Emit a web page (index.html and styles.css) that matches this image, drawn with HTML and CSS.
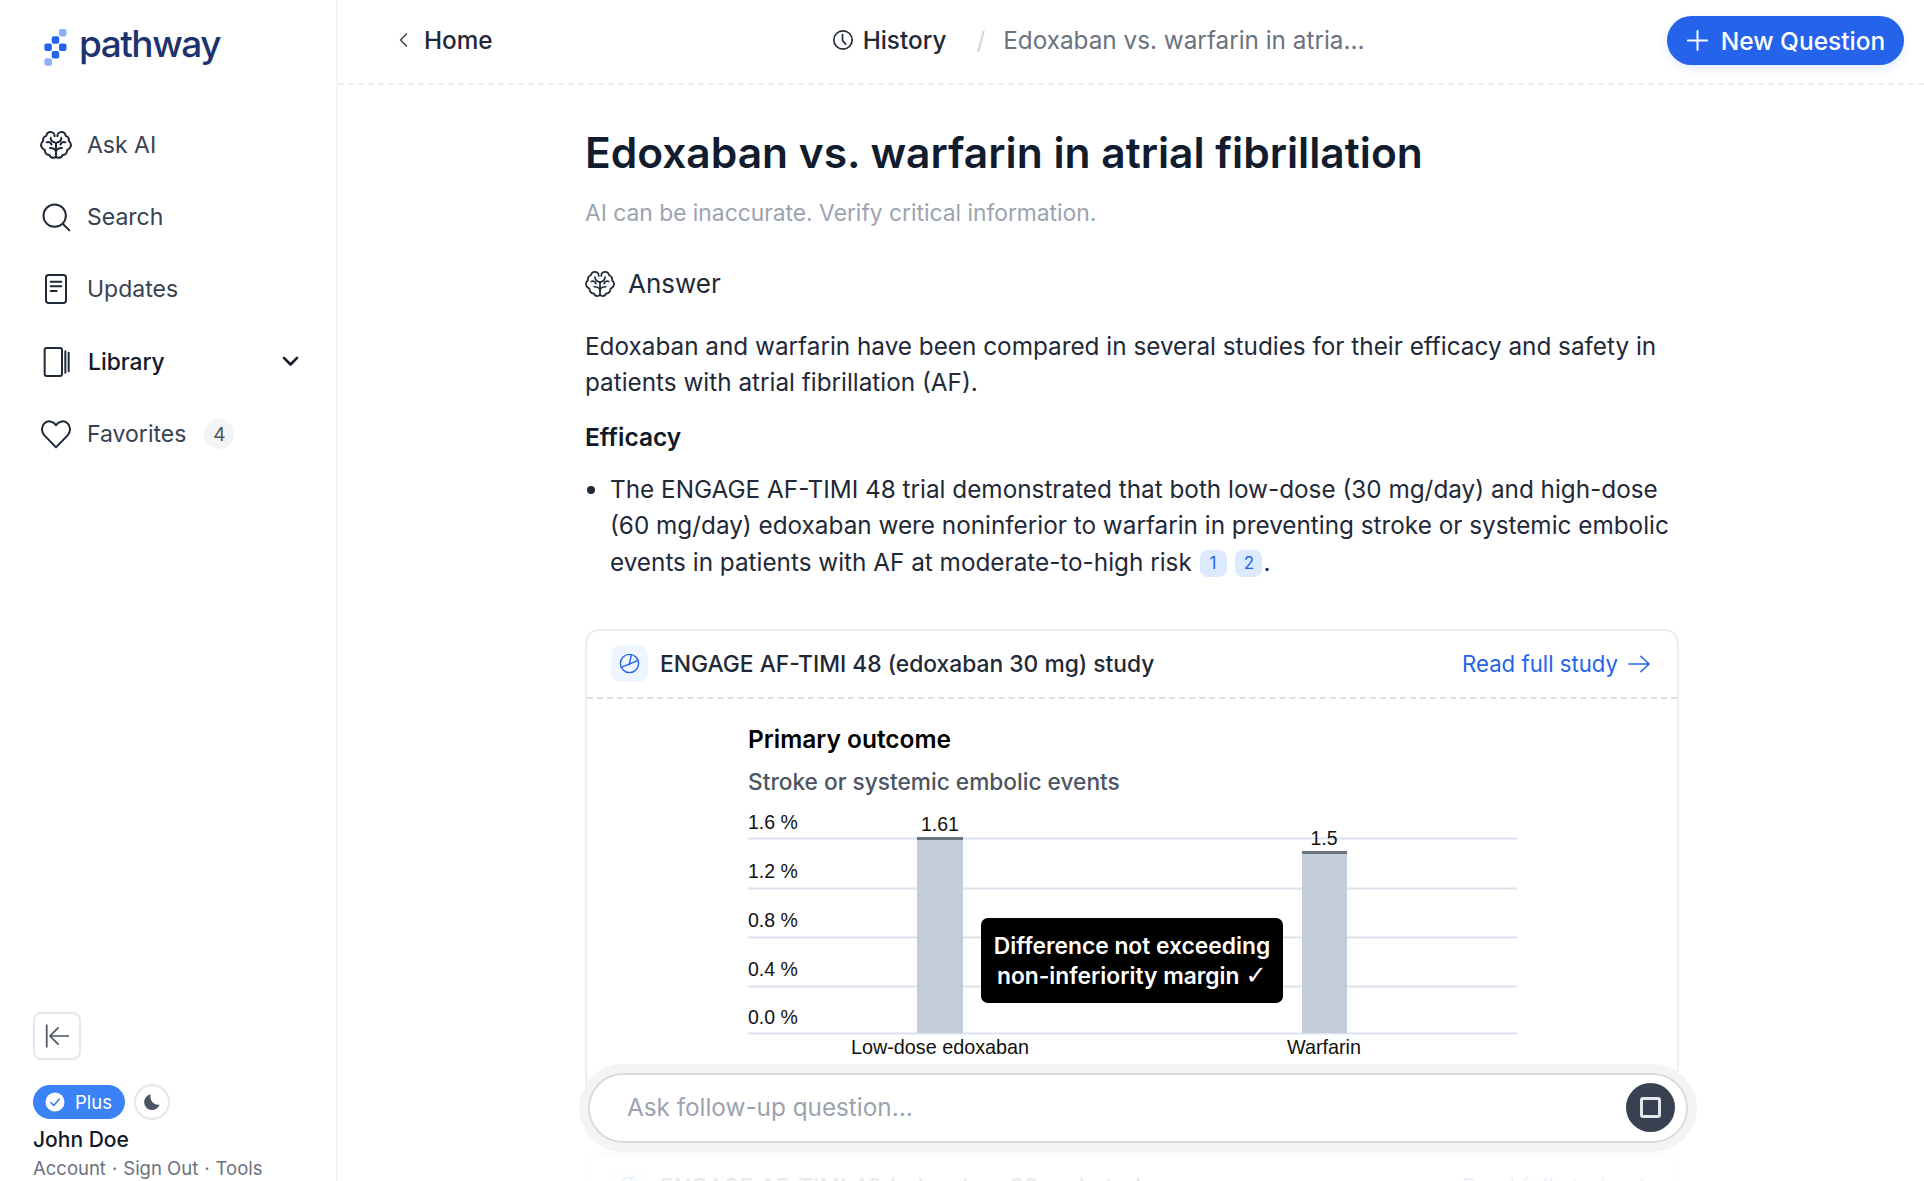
FILE: index.html
```html
<!DOCTYPE html>
<html lang="en">
<head>
<meta charset="utf-8">
<title>Edoxaban vs. warfarin in atrial fibrillation</title>
<link rel="stylesheet" href="styles.css">
</head>
<body>
<div class="app">
  <aside class="sidebar">
    <div class="logo">
      <svg class="logo-mark" viewBox="0 0 24 38" aria-hidden="true">
        <rect class="dot-light" x="15" y="1" width="7.5" height="7.5" rx="2"/>
        <rect class="dot" x="7.7" y="8.3" width="7.5" height="7.5" rx="2"/>
        <rect class="dot" x="0.4" y="15.6" width="7.5" height="7.5" rx="2"/>
        <rect class="dot" x="15" y="15.6" width="7.5" height="7.5" rx="2"/>
        <rect class="dot" x="7.7" y="23" width="7.5" height="7.5" rx="2"/>
        <rect class="dot-light" x="0.4" y="30.3" width="7.5" height="7.5" rx="2"/>
      </svg>
      <span class="logo-text">pathway</span>
    </div>
    <nav class="nav">
      <a class="nav-item">
        <svg class="nav-icon" viewBox="0 0 24 24"><use href="#brain"/></svg>
        <span>Ask AI</span>
      </a>
      <a class="nav-item">
        <svg class="nav-icon" viewBox="0 0 24 24"><circle cx="11" cy="11" r="8.4"/><path d="M17.2 17.2 22 22"/></svg>
        <span>Search</span>
      </a>
      <a class="nav-item">
        <svg class="nav-icon" viewBox="0 0 24 24"><rect x="4.5" y="1.5" width="15" height="21" rx="2"/><path d="M8 6.5h8M8 10h8M8 13.5h4.5"/></svg>
        <span>Updates</span>
      </a>
      <a class="nav-item nav-item-strong">
        <svg class="nav-icon" viewBox="0 0 24 24"><rect x="3.5" y="1.5" width="13" height="21" rx="1.5"/><path d="M19 4v16M21.5 5v14"/></svg>
        <span class="nav-label">Library</span>
        <svg class="nav-chevron" viewBox="0 0 16 16"><path d="m2.5 5 5.5 5.5L13.500 5"/></svg>
      </a>
      <a class="nav-item">
        <svg class="nav-icon" viewBox="0 0 24 24"><path d="M12 22 3.300 13C.8 10.300.9 6.200 3.400 3.900c2.600-2.300 6.300-1.700 8.600 1.500 2.300-3.200 6-3.800 8.600-1.500 2.500 2.300 2.600 6.400.1 9.100Z"/></svg>
        <span>Favorites</span>
        <span class="count">4</span>
      </a>
    </nav>
    <div class="side-foot">
      <button class="collapse" type="button" aria-label="Collapse">
        <svg viewBox="0 0 24 24"><path d="M2.500 2v20M22.500 12H6M13 4.500 5.500 12l7.500 7.500"/></svg>
      </button>
      <div class="plan-row">
        <span class="plan">
          <svg viewBox="0 0 20 20"><circle class="plan-disc" cx="10" cy="10" r="9.500"/><path class="plan-tick" d="m5.800 10.500 3 3 5.500-6.500"/></svg>
          Plus
        </span>
        <span class="theme">
          <svg viewBox="0 0 20 20"><path d="M8.500 1.500a8.800 8.800 0 1 0 10 11.200c-5.500 1.600-11.500-3.500-10-11.200Z"/></svg>
        </span>
      </div>
      <div class="user">John Doe</div>
      <div class="user-links">Account<i>·</i>Sign Out<i>·</i>Tools</div>
    </div>
  </aside>

  <main class="main">
    <header class="topbar">
      <a class="home">
        <svg viewBox="0 0 16 16"><path d="M10.500 2 4.500 8l6 6"/></svg>
        Home
      </a>
      <div class="crumbs">
        <svg viewBox="0 0 24 24"><circle cx="12" cy="12" r="10"/><path d="M11.500 6v6.500l3.500 4"/></svg>
        <span class="crumb-strong">History</span>
        <span class="crumb-sep">/</span>
        <span class="crumb-muted">Edoxaban vs. warfarin in atria...</span>
      </div>
      <button class="new-q" type="button">
        <svg viewBox="0 0 24 24"><path d="M12 2v20M2 12h20"/></svg>
        New Question
      </button>
    </header>

    <div class="content">
      <h1 class="title">Edoxaban vs. warfarin in atrial fibrillation</h1>
      <p class="disclaimer">AI can be inaccurate. Verify critical information.</p>
      <div class="answer-head">
        <svg viewBox="0 0 24 24"><use href="#brain"/></svg>
        Answer
      </div>
      <p class="para">Edoxaban and warfarin have been compared in several studies for their efficacy and safety in patients with atrial fibrillation (AF).</p>
      <h2 class="section">Efficacy</h2>
      <ul class="bullets">
        <li>The ENGAGE AF-TIMI 48 trial demonstrated that both low-dose (30 mg/day) and high-dose (60 mg/day) edoxaban were noninferior to warfarin in preventing stroke or systemic embolic events in patients with AF at moderate-to-high risk <span class="cite">1</span> <span class="cite">2</span>.</li>
      </ul>

      <section class="card">
        <div class="card-head">
          <span class="card-icon"><svg viewBox="0 0 24 24"><use href="#pie"/></svg></span>
          <span class="card-title">ENGAGE AF-TIMI 48 (edoxaban 30 mg) study</span>
          <a class="read">Read full study
            <svg viewBox="0 0 24 24"><path d="M1 12h22M14 3.500l9 8.500-9 8.500"/></svg>
          </a>
        </div>
        <div class="chart-wrap">
          <h3 class="chart-title">Primary outcome</h3>
          <p class="chart-sub">Stroke or systemic embolic events</p>
          <div class="chart">
            <svg class="chart-svg" viewBox="0 0 769 230" width="769" height="230">
              <g class="grid">
                <path d="M0 32.500H769M0 82.500H769M0 131.500H769M0 180.500H769M0 227.500H769"/>
              </g>
              <rect class="bar" x="169" y="31" width="46" height="196"/>
              <rect class="bar-cap" x="169" y="31" width="46" height="3"/>
              <rect class="bar" x="554" y="45" width="45" height="182"/>
              <rect class="bar-cap" x="554" y="45" width="45" height="3"/>
              <g class="tick-text">
                <text x="0" y="23">1.6 %</text>
                <text x="0" y="72">1.2 %</text>
                <text x="0" y="121">0.8 %</text>
                <text x="0" y="170">0.4 %</text>
                <text x="0" y="218">0.0 %</text>
                <text class="mid" x="192" y="25">1.61</text>
                <text class="mid" x="576" y="39">1.5</text>
              </g>
            </svg>
            <div class="chart-labels">
              <span class="x-label x-label-a">Low-dose edoxaban</span>
              <span class="x-label x-label-b">Warfarin</span>
            </div>
            <div class="callout">Difference not exceeding<br>non-inferiority margin <span class="check">✓</span></div>
          </div>
        </div>
      </section>

      <section class="card card-next">
        <div class="card-head">
          <span class="card-icon"><svg viewBox="0 0 24 24"><use href="#pie"/></svg></span>
          <span class="card-title">ENGAGE AF-TIMI 48 (edoxaban 60 mg) study</span>
          <a class="read">Read full study
            <svg viewBox="0 0 24 24"><path d="M1 12h22M14 3.500l9 8.500-9 8.500"/></svg>
          </a>
        </div>
      </section>
    </div>

    <div class="fade"></div>
    <div class="composer">
      <div class="composer-field">
        <span class="placeholder">Ask follow-up question...</span>
        <button class="stop" type="button" aria-label="Stop"><span class="stop-square"></span></button>
      </div>
    </div>
  </main>
</div>

<svg class="defs" aria-hidden="true">
  <defs>
    <symbol id="brain" viewBox="0 0 24 24">
      <path d="M11 5.500C11 3.600 9.600 2.200 7.900 2.200 6.300 2.200 5 3.400 4.800 5 3 5.500 2 7.200 2.400 9 1 10 .5 11.600 1 13.100c.4 1.300 1.400 2.300 2.600 2.600-.1 2.200 1.400 3.900 3.400 3.800.7 1.500 2 2.300 3.300 2.100 1-.1 1.700-.8 1.700-1.800"/>
      <path d="M13 5.500C13 3.600 14.400 2.200 16.100 2.200c1.600 0 2.900 1.200 3.100 2.800 1.800.5 2.800 2.200 2.400 4 1.400 1 1.900 2.600 1.400 4.100-.4 1.300-1.400 2.300-2.600 2.600.1 2.200-1.400 3.900-3.400 3.800-.7 1.500-2 2.300-3.300 2.100-1-.1-1.700-.8-1.700-1.800"/>
      <path d="M12 20.800V10.500"/>
      <path d="M12 17c-.3-1.700-1.800-2.700-4.500-2.800M5 10c1.700-.6 3.200.1 3.700 1.700M8 6.500c0 2 1.200 3.300 4 3.900"/>
      <path d="M12 17c.3-1.700 1.800-2.700 4.500-2.800M19 10c-1.700-.6-3.200.1-3.700 1.700M16 6.500c0 2-1.200 3.300-4 3.900"/>
    </symbol>
    <symbol id="pie" viewBox="0 0 24 24">
      <circle cx="12" cy="12" r="9.500"/>
      <path d="M14 2.800 11.600 13.400M20.800 8.800 3.400 16"/>
    </symbol>
  </defs>
</svg>
</body>
</html>
```

FILE: styles.css
```css
* { box-sizing: border-box; }
html, body { margin: 0; height: 100%; }
body {
  font-family: Inter, "Noto Sans", "Liberation Sans", sans-serif;
  color: #111827;
  background: #fff;
  overflow: hidden;
}
a { color: inherit; text-decoration: none; }
button { font: inherit; border: 0; background: none; padding: 0; }
.defs { position: absolute; width: 0; height: 0; }

.app { display: flex; height: 1181px; overflow: hidden; }

/* Sidebar */
.sidebar {
  flex: 0 0 338px;
  display: flex;
  flex-direction: column;
  border-right: 2px solid #f3f4f6;
}
.logo {
  height: 108.500px;
  padding: 28px 0 0 44px;
  display: flex;
  align-items: flex-start;
  gap: 11px;
}
.logo-mark { width: 24px; height: 38px; flex: none; }
.dot { fill: #2563eb; }
.dot-light { fill: #8fb0f6; }
.logo-text {
  font-size: 37px;
  line-height: 32px;
  font-weight: 500;
  letter-spacing: -1.500px;
  color: #1e3270;
}
.nav { display: flex; flex-direction: column; padding-left: 40px; padding-right: 36px; }
.nav-item {
  height: 72.400px;
  display: flex;
  align-items: center;
  gap: 15px;
  font-size: 23px;
  color: #374151;
}
.nav-item-strong { color: #111827; font-weight: 500; font-size: 22.800px; gap: 16px; }
.nav-icon {
  width: 32px;
  height: 32px;
  flex: none;
  fill: none;
  stroke: #1f2937;
  stroke-width: 1.500;
  stroke-linecap: round;
  stroke-linejoin: round;
}
.nav-label { flex: 1; }
.nav-chevron {
  width: 19px;
  height: 19px;
  fill: none;
  stroke: #111827;
  stroke-width: 2.200;
  stroke-linecap: round;
  stroke-linejoin: round;
}
.count {
  width: 30px;
  height: 30px;
  margin-left: 3px;
  border-radius: 50%;
  background: #f3f4f6;
  color: #4b5563;
  font-size: 19px;
  display: flex;
  align-items: center;
  justify-content: center;
}
.side-foot { margin-top: auto; padding: 0 0 1px 33px; }
.collapse {
  width: 48px;
  height: 48px;
  border: 2px solid #e5e7eb;
  border-radius: 8px;
  background: #fff;
  display: flex;
  align-items: center;
  justify-content: center;
}
.collapse svg {
  width: 26px;
  height: 26px;
  fill: none;
  stroke: #4b5563;
  stroke-width: 1.600;
  stroke-linecap: round;
  stroke-linejoin: round;
}
.plan-row { display: flex; align-items: center; gap: 9px; margin-top: 24px; }
.plan {
  width: 92px;
  height: 34px;
  border-radius: 17px;
  background: #3b82f6;
  color: #fff;
  font-size: 18.500px;
  display: flex;
  align-items: center;
  gap: 10px;
  padding-left: 12px;
}
.plan svg { width: 20px; height: 20px; flex: none; }
.plan-disc { fill: #fff; }
.plan-tick { fill: none; stroke: #3b82f6; stroke-width: 1.600; stroke-linecap: round; stroke-linejoin: round; }
.theme {
  width: 36px;
  height: 36px;
  border: 2px solid #e5e7eb;
  border-radius: 50%;
  display: flex;
  align-items: center;
  justify-content: center;
}
.theme svg { width: 18px; height: 18px; fill: #4b5563; }
.user { font-size: 21px; line-height: 28px; font-weight: 500; margin-top: 6px; color: #111827; }
.user-links { font-size: 18.500px; line-height: 24px; color: #6b7280; margin-top: 2px; white-space: nowrap; }
.user-links i { font-style: normal; margin: 0 6px; }

/* Main */
.main { flex: 1; min-width: 0; position: relative; height: 100%; overflow: hidden; }
.topbar {
  height: 85px;
  padding: 0 20px 4px 58px;
  display: flex;
  align-items: center;
  border-bottom: 2px dashed #eceef1;
  font-size: 24.300px;
}
.home { display: flex; align-items: center; gap: 12px; font-weight: 500; color: #1f2937; }
.home svg {
  width: 16px;
  height: 16px;
  fill: none;
  stroke: #374151;
  stroke-width: 1.500;
  stroke-linecap: round;
  stroke-linejoin: round;
}
.crumbs { display: flex; align-items: center; margin-left: 339px; white-space: nowrap; }
.crumbs svg {
  width: 22px;
  height: 22px;
  margin-right: 9px;
  fill: none;
  stroke: #1f2937;
  stroke-width: 1.800;
  stroke-linecap: round;
  stroke-linejoin: round;
}
.crumb-strong { font-weight: 500; color: #1f2937; }
.crumb-sep { margin: 0 18px 0 30px; color: #d1d5db; }
.crumb-muted { color: #6b7280; }
.new-q {
  margin-left: auto;
  margin-top: 2px;
  width: 237px;
  height: 49px;
  border-radius: 25px;
  background: #2563eb;
  color: #fff;
  font-weight: 500;
  font-size: 24.500px;
  box-shadow: 0 4px 10px rgba(37, 99, 235, 0.12);
  display: flex;
  align-items: center;
  justify-content: center;
  gap: 12px;
}
.new-q svg { width: 23px; height: 23px; fill: none; stroke: #fff; stroke-width: 2; stroke-linecap: round; }

/* Content column */
.content { width: 1094px; margin-left: 247px; padding-top: 42px; }
.title { margin: 0; font-size: 42.500px; line-height: 52px; font-weight: 600; color: #111c2e; }
.disclaimer { margin: 18px 0 0; font-size: 22.800px; line-height: 32px; color: #9ca3af; }
.answer-head {
  margin-top: 37px;
  display: flex;
  align-items: center;
  gap: 13px;
  font-size: 26px;
  line-height: 36px;
  font-weight: 400;
  color: #1f2937;
}
.answer-head svg {
  width: 30px;
  height: 30px;
  fill: none;
  stroke: #1f2937;
  stroke-width: 1.400;
  stroke-linecap: round;
  stroke-linejoin: round;
}
.para { margin: 26px 0 0; font-size: 24.300px; line-height: 36.400px; color: #1f2937; }
.section { margin: 18px 0 0; font-size: 24.500px; line-height: 36.700px; font-weight: 600; color: #111827; }
.bullets { margin: 15px 0 0; padding: 0 0 0 25px; font-size: 24.300px; line-height: 36.700px; color: #1f2937; }
.cite {
  display: inline-block;
  width: 27px;
  height: 27px;
  margin: 0 1px;
  border-radius: 8px;
  background: #dbeafe;
  color: #2563eb;
  font-size: 17px;
  line-height: 27px;
  text-align: center;
  vertical-align: 2px;
}

/* Study card */
.card { margin-top: 48px; border: 2px solid #edeef1; border-radius: 14px; }
.card-head {
  height: 68px;
  padding: 0 27px 0 24px;
  display: flex;
  align-items: center;
  gap: 12px;
  border-bottom: 2px dashed #dde0e5;
  font-size: 22.800px;
}
.card-icon {
  width: 37px;
  height: 37px;
  border-radius: 9px;
  background: #eff6ff;
  display: flex;
  align-items: center;
  justify-content: center;
}
.card-icon svg { width: 23px; height: 23px; fill: none; stroke: #2563eb; stroke-width: 1.500; stroke-linecap: round; stroke-linejoin: round; }
.card-title { font-weight: 500; color: #1f2937; }
.read { margin-left: auto; display: flex; align-items: center; gap: 10px; color: #2563eb; font-weight: 400; font-size: 22.200px; }
.read svg { width: 22px; height: 22px; fill: none; stroke: #2563eb; stroke-width: 1.700; stroke-linecap: round; stroke-linejoin: round; }
.chart-wrap { padding: 24px 0 0 161px; height: 433px; }
.chart-title { margin: 0; font-size: 24.500px; line-height: 32px; font-weight: 600; color: #000; }
.chart-sub { margin: 11px 0 0; font-size: 22.700px; line-height: 32px; font-weight: 500; color: #4b5563; }
.chart { position: relative; width: 769px; margin-top: 8px; }
.chart-svg { display: block; }
.grid path { stroke: #dce3ec; stroke-width: 2; fill: none; }
.bar { fill: #c3cdd9; }
.bar-cap { fill: #6b7280; }
.tick-text text { font-family: "Liberation Sans", Arial, sans-serif; font-size: 19.500px; fill: #111; }
.tick-text .mid { text-anchor: middle; }
.chart-labels { position: relative; height: 30px; font-family: "Liberation Sans", Arial, sans-serif; font-size: 19.800px; color: #111; }
.x-label { position: absolute; top: 0; transform: translateX(-50%); white-space: nowrap; }
.x-label-a { left: 192px; }
.x-label-b { left: 576px; }
.callout {
  position: absolute;
  left: 233px;
  top: 112px;
  width: 302px;
  height: 85px;
  border-radius: 7px;
  background: #000;
  color: #fff;
  font-size: 22.800px;
  font-weight: 600;
  line-height: 30px;
  text-align: center;
  padding-top: 13px;
  white-space: nowrap;
}
.check { font-family: "DejaVu Sans", sans-serif; font-weight: 700; font-size: 26px; line-height: 0; }
.card-next { margin-top: 18px; height: 120px; }

/* Composer over the scrolled content */
.fade {
  position: absolute;
  left: 0;
  right: 0;
  bottom: 0;
  height: 60px;
  background: linear-gradient(to bottom, rgba(255,255,255,0.75), rgba(255,255,255,0.9));
}
.composer {
  position: absolute;
  left: 241px;
  top: 1064px;
  width: 1118px;
  height: 88px;
  padding: 9px;
  border-radius: 44px;
  background: #f3f4f6;
}
.composer-field {
  height: 70px;
  border: 2px solid #d9dce1;
  border-radius: 35px;
  background: #fff;
  display: flex;
  align-items: center;
  justify-content: space-between;
  padding: 0 11px 2px 37px;
  font-size: 24.300px;
  color: #9ca3af;
}
.stop {
  width: 49px;
  height: 49px;
  border-radius: 50%;
  background: #374151;
  display: flex;
  align-items: center;
  justify-content: center;
  margin-bottom: -1px;
}
.stop-square { width: 21px; height: 21px; border: 3px solid #e5e7eb; border-radius: 3px; }
```
